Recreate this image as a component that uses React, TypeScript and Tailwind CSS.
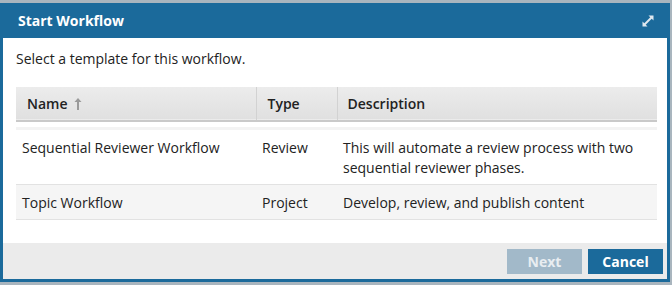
import React from 'react';

interface Template {
    name: string;
    type: string;
    description: string;
}

const templates: Template[] = [
    {
        name: 'Sequential Reviewer Workflow',
        type: 'Review',
        description: 'This will automate a review process with two sequential reviewer phases.',
    },
    { name: 'Topic Workflow', type: 'Project', description: 'Develop, review, and publish content' },
];

function ExpandIcon() {
    return (
        <svg width="14" height="14" viewBox="0 0 14 14" className="text-[#dfe8ef]">
            <path d="M3 11 L11 3" stroke="currentColor" strokeWidth="2" />
            <path d="M7.5 1.5 L12.5 1.5 L12.5 6.5 Z" fill="currentColor" />
            <path d="M1.5 7.5 L1.5 12.5 L6.5 12.5 Z" fill="currentColor" />
        </svg>
    );
}

function SortArrow() {
    return (
        <svg width="8" height="14" viewBox="0 0 8 14" className="text-[#9a9a9a]">
            <path d="M4 1 L7.5 5 L5 5 L5 13 L3 13 L3 5 L0.5 5 Z" fill="currentColor" />
        </svg>
    );
}

export default function App() {
    return (
        <div className="w-[672px] h-[285px] bg-[#a9b5be] pt-[3px] pr-[2px] pb-[3px] font-['Open_Sans',sans-serif]">
            <div className="h-full flex flex-col border-x-[3px] border-b-[3px] border-[#1b6a9b] bg-white">
                {/* Header */}
                <div className="h-[35px] shrink-0 bg-[#1b6a9b] flex items-center justify-between pl-[15px] pr-[12px]">
                    <span className="text-white font-bold text-[14px]">Start Workflow</span>
                    <ExpandIcon />
                </div>

                {/* Body */}
                <div className="flex-1 pl-[13px] pr-[10px] pt-[11px]">
                    <p className="text-[14px] leading-[20px] text-[#222]">Select a template for this workflow.</p>
                    <table className="mt-[18px] w-full border-collapse text-[14px] text-[#222]">
                        <thead>
                            <tr className="h-[34px] bg-gradient-to-b from-[#ececec] to-[#e0e0e0] border-b-2 border-[#c9c9c9]">
                                <th className="w-[240px] text-left font-semibold pl-[11px] border-r border-[#d2d2d2]">
                                    <span className="inline-flex items-center gap-[6px]">
                                        Name <SortArrow />
                                    </span>
                                </th>
                                <th className="w-[81px] text-left font-semibold pl-[11px] border-r border-[#d2d2d2]">Type</th>
                                <th className="text-left font-semibold pl-[10px]">Description</th>
                            </tr>
                        </thead>
                        <tbody>
                            <tr className="h-[9px]">
                                <td colSpan={3} className="p-0 align-bottom">
                                    <div className="h-[3px] bg-[#f3f3f3]" />
                                </td>
                            </tr>
                            {templates.map((t, i) => (
                                <tr
                                    key={t.name}
                                    className={`border-b border-[#e2e2e2] ${i % 2 === 1 ? 'bg-[#f5f5f5]' : 'bg-white'}`}
                                >
                                    <td className="align-top pl-[6px] pt-[8px] pb-[6px] leading-[20px]">{t.name}</td>
                                    <td className="align-top pl-[6px] pt-[8px] pb-[6px] leading-[20px]">{t.type}</td>
                                    <td className="align-top pl-[6px] pr-[20px] pt-[8px] pb-[6px] leading-[20px]">{t.description}</td>
                                </tr>
                            ))}
                        </tbody>
                    </table>
                </div>

                {/* Footer */}
                <div className="h-[36px] shrink-0 bg-[#ebebeb] flex items-center justify-end gap-[6px] pr-[4px]">
                    <button className="w-[75px] h-[25px] bg-[#a2b9c9] text-[#e8edf1] font-bold text-[14px]">Next</button>
                    <button className="w-[75px] h-[25px] bg-[#1b6a9b] text-white font-bold text-[14px]">Cancel</button>
                </div>
            </div>
        </div>
    );
}
